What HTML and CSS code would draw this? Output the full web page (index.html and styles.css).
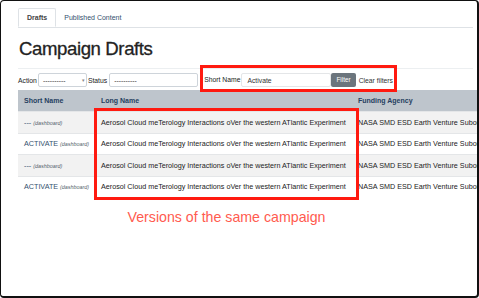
FILE: index.html
```html
<!DOCTYPE html>
<html>
<head>
<meta charset="utf-8">
<link rel="stylesheet" href="styles.css">
</head>
<body>
<div class="frame">
  <div class="page">
    <div class="tabs">
      <div class="tab active">Drafts</div>
      <div class="tab">Published Content</div>
    </div>
    <h1 class="title">Campaign Drafts</h1>
    <div class="filters">
      <span class="lbl">Action</span>
      <span class="select">----------<span class="caret">&#9662;</span></span>
      <span class="lbl">Status</span>
      <span class="input status">----------</span>
      <span class="sn-group">
        <span class="lbl sn">Short Name</span>
        <span class="input sn-input">Activate</span>
        <span class="btn">Filter</span>
        <span class="clear">Clear filters</span>
      </span>
    </div>
    <table class="grid">
      <thead>
        <tr><th class="c1">Short Name</th><th class="c2">Long Name</th><th class="c3">Funding Agency</th></tr>
      </thead>
      <tbody>
        <tr class="odd"><td class="c1"><span class="muted">---</span> <i class="dash">(dashboard)</i></td><td class="c2">Aerosol Cloud meTerology Interactions oVer the western ATlantic Experiment</td><td class="c3">NASA SMD ESD Earth Venture Suborbital</td></tr>
        <tr><td class="c1"><span class="link">ACTIVATE</span> <i class="dash">(dashboard)</i></td><td class="c2">Aerosol Cloud meTerology Interactions oVer the western ATlantic Experiment</td><td class="c3">NASA SMD ESD Earth Venture Suborbital</td></tr>
        <tr class="odd"><td class="c1"><span class="muted">---</span> <i class="dash">(dashboard)</i></td><td class="c2">Aerosol Cloud meTerology Interactions oVer the western ATlantic Experiment</td><td class="c3">NASA SMD ESD Earth Venture Suborbital</td></tr>
        <tr><td class="c1"><span class="link">ACTIVATE</span> <i class="dash">(dashboard)</i></td><td class="c2">Aerosol Cloud meTerology Interactions oVer the western ATlantic Experiment</td><td class="c3">NASA SMD ESD Earth Venture Suborbital</td></tr>
      </tbody>
    </table>
  </div>
  <div class="mark mark-filter"></div>
  <div class="mark mark-rows"></div>
  <div class="note">Versions of the same campaign</div>
</div>
</body>
</html>
```
FILE: styles.css
```css
html, body {
  margin: 0;
  padding: 0;
  background: #ffffff;
}
body {
  font-family: "Liberation Sans", Arial, sans-serif;
  color: #212529;
}
.frame {
  position: relative;
  width: 479px;
  height: 298px;
  box-sizing: border-box;
  border-top: 1px solid #111;
  border-left: 1px solid #111;
  border-right: 2px solid #111;
  border-bottom: 2px solid #111;
  border-radius: 4px;
  overflow: hidden;
}
.page {
  padding: 7px 0 0 17px;
  width: 455px;
}
.tabs {
  display: flex;
  border-bottom: 1px solid #dee2e6;
  height: 19px;
}
.tab {
  font-size: 7px;
  line-height: 19px;
  padding: 0 7px;
  color: #34506e;
  margin-right: 1px;
}
.tab.active {
  color: #444;
  font-weight: bold;
  border: 1px solid #dee2e6;
  border-bottom-color: #fff;
  border-radius: 2px 2px 0 0;
  height: 19px;
  box-sizing: border-box;
  line-height: 17px;
  margin-bottom: -1px;
  background: #fff;
  padding: 0 8px;
}
.title {
  margin: 0;
  padding: 9px 0 0 1px;
  font-size: 18.6px;
  font-weight: 400;
  -webkit-text-stroke: 0.3px #222;
  color: #222;
  line-height: 23px;
  height: 31px;
  border-bottom: 1px solid #eceff1;
  letter-spacing: -0.4px;
}
.filters {
  display: flex;
  align-items: center;
  height: 22px;
  font-size: 6.8px;
  color: #222;
}
.lbl { margin-right: 1px; }
.select, .input {
  display: inline-flex;
  align-items: center;
  box-sizing: border-box;
  height: 14px;
  border: 1px solid #ced4da;
  border-radius: 2px;
  background: #fff;
  padding: 0 4px;
  color: #333;
}
.select {
  width: 49px;
  justify-content: space-between;
  margin-right: 1px;
  padding-right: 1px;
}
.caret { font-size: 5px; color: #888; }
.input.status { width: 89px; margin-left: 1px; margin-right: 2px; }
.sn-group {
  display: flex;
  align-items: center;
  height: 14px;
  margin-left: 2px;
}
.lbl.sn {
  border-left: 1px solid #bbb;
  padding-left: 1px;
  height: 14px;
  line-height: 14px;
}
.sn-input {
  width: 90px;
  border-color: #e4e6e8;
  padding-left: 5px;
}
.btn {
  background: #6c757d;
  color: #fff;
  height: 14px;
  line-height: 14px;
  padding: 0 5px;
  border-radius: 2px;
  font-size: 6.4px;
  margin-right: 3px;
}
.clear { color: #333; }
.grid {
  border-collapse: collapse;
  width: 500px;
  table-layout: fixed;
  font-size: 7.2px;
  margin-top: -1px;
}
.grid th {
  background: #bec5cc;
  color: #25405f;
  font-weight: bold;
  text-align: left;
  height: 21px;
  padding: 0 6px;
  font-size: 7px;
}
.grid td {
  height: 20.5px;
  padding: 0 6px;
  white-space: nowrap;
  overflow: hidden;
  border-top: 1px solid #e4e6e8;
  color: #222;
}
.grid tr.odd td { background: #f2f2f2; }
.c1 { width: 65px; }
.c2 { width: 245px; }
.c3 { width: 170px; }
.grid td.c1 { color: #34506e; }
.muted { color: #34506e; }
.link { color: #34506e; }
.dash { font-size: 5.4px; color: #555f6b; }
.mark {
  position: absolute;
  border: 3px solid #ff1a10;
  box-sizing: border-box;
}
.mark-filter {
  left: 199px;
  top: 64px;
  width: 197px;
  height: 27px;
}
.mark-rows {
  left: 93px;
  top: 107px;
  width: 265px;
  height: 92px;
}
.note {
  position: absolute;
  left: 93px;
  width: 265px;
  top: 208px;
  text-align: center;
  color: #ff5b4f;
  font-size: 14.2px;
}
```
